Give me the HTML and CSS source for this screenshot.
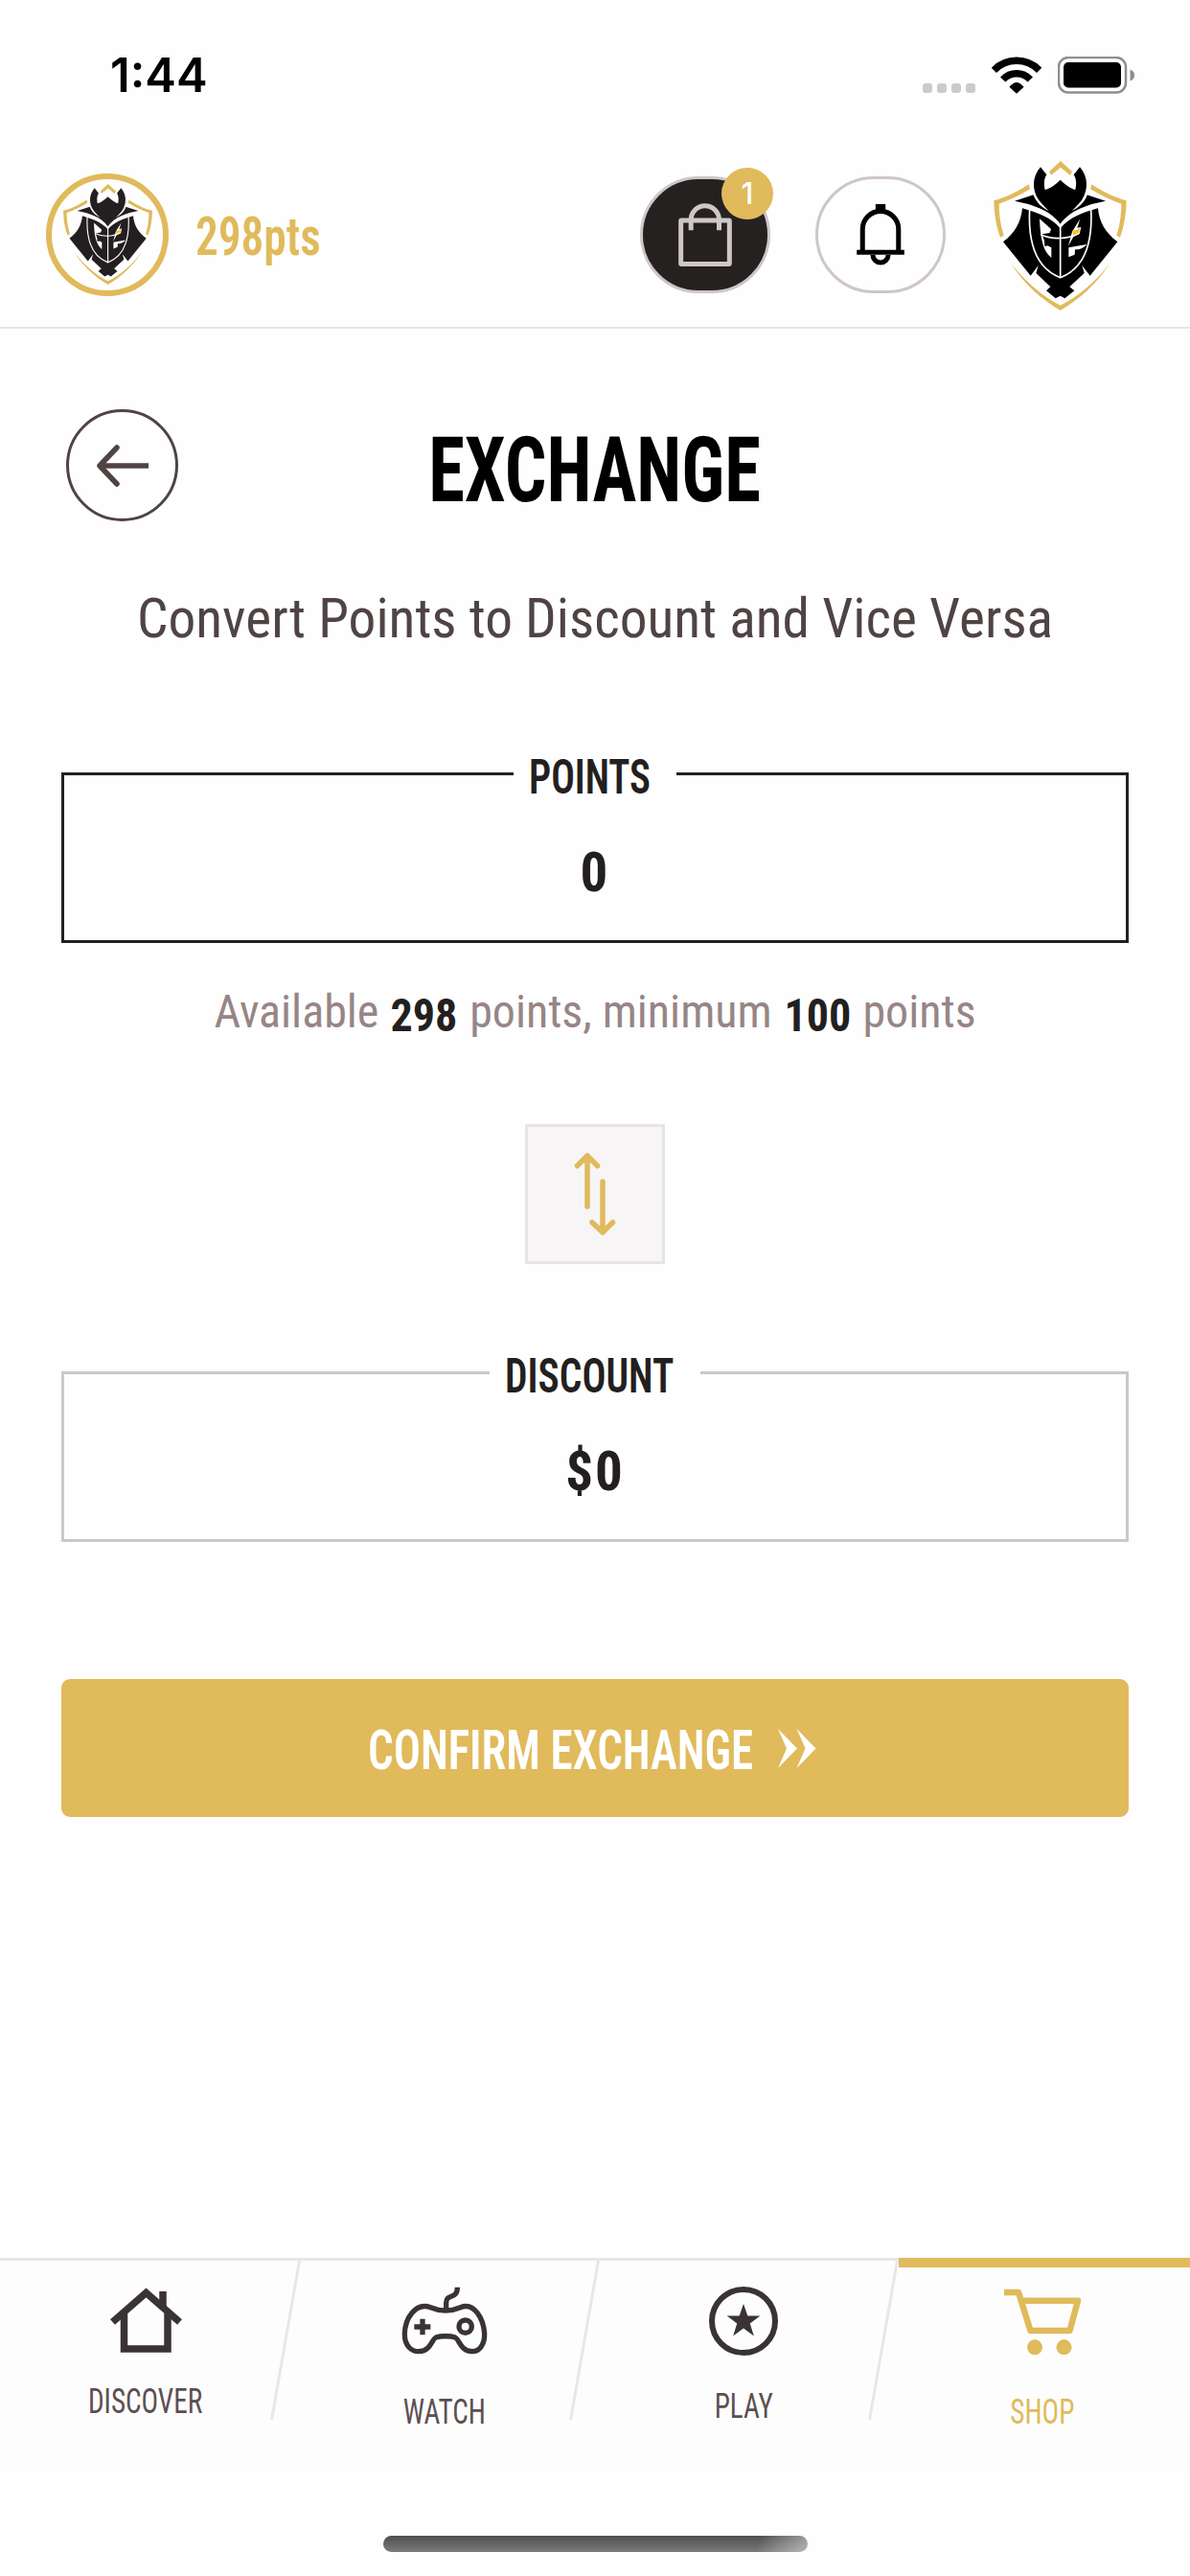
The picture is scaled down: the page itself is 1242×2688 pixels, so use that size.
FILE: index.html
```html
<!DOCTYPE html>
<html lang="en">
<head>
    <meta charset="UTF-8">
    <meta name="viewport" content="width=device-width, initial-scale=1.0">
    <title>Exchange</title>
    <link rel="stylesheet" href="styles.css">
</head>
<body>

    <!-- Crest, shared by the avatar and the header logo -->
    <svg class="defs" width="0" height="0">
        <symbol id="crest" viewBox="23 25 415 468">
            <g fill="#e0ba5b">
                <path d="M196 58L232 25L268 58L262 70L232 45L202 69Z"/>
                <path d="M132 98C100 120 60 140 23 149C24 190 30 230 43 264L54 258C43 225 39 190 39 159C72 148 105 132 136 113Z"/>
                <path d="M329 98C361 120 401 140 438 149C437 190 431 230 418 264L407 258C418 225 422 190 422 159C389 148 356 132 325 113Z"/>
                <path d="M76 344C115 410 175 460 231 493C288 460 346 410 387 344C345 400 285 452 231 477C178 452 118 400 76 344Z"/>
            </g>
            <g fill="currentColor">
                <path d="M169 44L188 68C178 84 180 102 183 115C200 111 216 98 231 84C246 98 262 111 278 115C281 102 283 84 273 68L292 44C319 75 319 115 298 148L314 131L373 150C320 160 262 178 231 222C200 178 140 160 88 150L147 131L163 148C142 115 142 75 169 44Z"/>
                <path d="M112 173C108 215 90 250 52 278L138 384L162 352L155 376L200 419L187 431L216 455L231 447L245 455L275 431L260 419L306 376L299 352L324 384L410 278C372 250 352 215 349 173C300 187 262 200 231 236C200 200 158 187 112 173Z"/>
            </g>
            <g fill="#fff">
                <path d="M147 126L157 138C166 152 180 166 195 181C174 170 157 157 147 132Z"/>
                <path d="M315 126L305 138C296 152 282 166 267 181C288 170 305 157 315 132Z"/>
                <path d="M166 206L202 238L198 250L174 254C178 275 188 278 188 288L203 296V328C172 303 168 255 166 206Z"/>
                <path d="M257 326V296L314 286C302 300 288 303 277 302L276 318Z"/>
                <path d="M293 206L284 234L296 232L291 254L272 262L256 291L268 246Z"/>
            </g>
            <g fill="none" stroke="#fff" stroke-width="5">
                <path d="M135 176C130 270 148 358 231 390C314 358 332 270 327 176"/>
                <path d="M231 230V390"/>
                <path d="M170 255C205 272 255 270 285 252"/>
            </g>
            <path fill="currentColor" d="M180 262C184 277 192 277 192 290L182 292Z"/>
            <path fill="#fbbf2d" d="M268 243L284 240L294 233L289 249L272 258Z"/>
        </symbol>
    </svg>

    <div class="status-bar">
        <span class="time">1:44</span>
        <div class="status-icons">
            <div class="dots"><i></i><i></i><i></i><i></i></div>
            <svg class="wifi" viewBox="404 86 155 115">
                <path d="M411 128C450 88 513 88 552 128M439 157C462 132 501 132 524 157" fill="none" stroke="#000" stroke-width="22"/>
                <path d="M459 180Q481.500 152 504 180L481.500 201Z"/>
            </svg>
            <svg class="battery" viewBox="0 0 80 39">
                <rect x="1" y="1" width="70" height="36.500" rx="10" fill="none" stroke="#8e8e8e" stroke-width="2.500"/>
                <rect x="6" y="6" width="60" height="26.500" rx="5"/>
                <path d="M75.500 13.500Q80 15 80 19.500T75.500 25.500Z" fill="#8e8e8e"/>
            </svg>
        </div>
    </div>

    <header class="header">
        <div class="avatar"><svg><use href="#crest"/></svg></div>
        <span class="pts"><span>298pts</span></span>
        <div class="actions">
            <button class="pill pill-dark">
                <svg width="56" height="66" viewBox="144 138 167 198" fill="none" stroke="#cec6c7" stroke-width="15">
                    <rect x="151.500" y="192" width="152" height="136.500" rx="2"/>
                    <path d="M183 223V190a44 44 0 0 1 88 0V223"/>
                </svg>
                <span class="badge">1</span>
            </button>
            <button class="pill">
                <svg width="50" height="64" viewBox="764 186 148 191" fill="none" stroke="#000" stroke-width="15">
                    <path d="M782 335V264a56 56 0 0 1 112 0V335M764 336H912M814 344a24 24 0 0 0 48 0"/>
                    <path d="M838 186V208" stroke-width="31"/>
                </svg>
            </button>
            <svg class="logo"><use href="#crest"/></svg>
        </div>
    </header>

    <main class="content">
        <div class="title-row">
            <button class="back">
                <svg width="56" height="44" viewBox="0 0 56 44" fill="none" stroke="#4f4344" stroke-width="5.500" stroke-linejoin="round">
                    <path d="M55 22H4"/>
                    <path d="M22 3L4 22L22 41" stroke-linecap="round"/>
                </svg>
            </button>
            <h1><span>EXCHANGE</span></h1>
        </div>
        <p class="subtitle">Convert Points to Discount and Vice Versa</p>

        <div class="field active">
            <div class="field-label points-label"><span>POINTS</span></div>
            <div class="field-value">0</div>
        </div>
        <p class="hint">Available <b>298</b> points, minimum <b>100</b> points</p>

        <button class="swap">
            <svg width="44" height="88" viewBox="0 0 44 88" fill="none" stroke="#e0ba5b" stroke-width="5.500" stroke-linecap="round" stroke-linejoin="round">
                <path d="M14 57V4M3.500 14.500L14 4L24.500 14.500"/>
                <path d="M30 31V84M19 73.500L30 84L40.500 73.500"/>
            </svg>
        </button>

        <div class="field">
            <div class="field-label discount-label"><span>DISCOUNT</span></div>
            <div class="field-value">$0</div>
        </div>

        <button class="confirm">
            <span class="confirm-text"><span>CONFIRM EXCHANGE</span></span>
            <svg width="40" height="41" viewBox="0 0 40 41" fill="#fff">
                <path d="M0 0L20 20.500L0 41L9 20.500ZM19.500 0L39.500 20.500L19.500 41L28.500 20.500Z"/>
            </svg>
        </button>
    </main>

    <nav class="tabs">
        <a class="tab tab-discover">
            <svg width="75" height="72" viewBox="0 0 75 72" fill="none" stroke="#393433" stroke-width="7.500">
                <path d="M2.500 37L37.500 6.500L72.500 37"/>
                <path d="M14.500 28V65H60V28M55 5V20"/>
            </svg>
            <span>DISCOVER</span>
        </a>
        <a class="tab tab-watch">
            <svg width="90" height="72" viewBox="57 48 270 216" fill="none" stroke="#393433" stroke-width="16">
                <path d="M195 123C175 123 160 118 148 113C100 95 68 150 67 195C66 235 90 252 112 251C150 248 150 215 165 207C180 202 210 202 225 207C240 215 240 248 278 251C300 252 318 230 317 195C314 150 285 95 242 113C228 119 212 123 195 123Z"/>
                <path d="M197 120V100C197 66 232 92 232 50M97 174H148M123 149V199"/>
                <circle cx="257" cy="173" r="20"/>
            </svg>
            <span>WATCH</span>
        </a>
        <a class="tab tab-play">
            <svg width="72" height="72" viewBox="0 0 72 72">
                <circle cx="36" cy="36" r="33" fill="none" stroke="#393433" stroke-width="6"/>
                <path fill="#393433" d="M36 18L40.300 30.500H53.400L42.800 38.500L46.800 51.500L36 43.500L25.200 51.500L29.200 38.500L18.600 30.500H31.700Z"/>
            </svg>
            <span>PLAY</span>
        </a>
        <a class="tab tab-shop">
            <svg width="81" height="72" viewBox="0 -2 81 72" fill="none" stroke="#e0ba5b" stroke-width="6.500" stroke-linejoin="round">
                <path d="M0 4H15L27.500 44H68.500L77 12.700H18"/>
                <circle cx="32" cy="61.300" r="8" fill="#e0ba5b" stroke="none"/>
                <circle cx="62.500" cy="61.300" r="8" fill="#e0ba5b" stroke="none"/>
            </svg>
            <span>SHOP</span>
        </a>
    </nav>
    <div class="home-indicator"></div>

</body>
</html>
```
FILE: styles.css
```css
* {
    box-sizing: border-box;
}
body {
    font-family: 'Roboto Condensed', Roboto, sans-serif;
    font-stretch: 75%;
    margin: 0;
    background: #fefefe;
    width: 1242px;
    height: 2688px;
    display: flex;
    flex-direction: column;
    overflow: hidden;
    color: #231f20;
}
button {
    font: inherit;
    padding: 0;
    background: none;
    border: none;
}
svg {
    display: block;
    flex: none;
}
.defs {
    position: absolute;
}
/* Status bar */
.status-bar {
    height: 148px;
    padding: 0 58px 0 115px;
    display: flex;
    justify-content: space-between;
}
.time {
    font-family: Inter, sans-serif;
    font-weight: 600;
    font-size: 49px;
    line-height: 158px;
    color: #000;
}
.status-icons {
    display: flex;
    height: 39px;
    margin-top: 59px;
}
.dots {
    display: flex;
    gap: 5px;
    align-items: flex-end;
    margin: 0 17px 1px 0;
}
.dots i {
    width: 10px;
    height: 10px;
    border-radius: 3px;
    background: #cbcbcb;
}
.wifi {
    width: 52px;
    height: 39px;
    margin-right: 17px;
}
.battery {
    width: 80px;
    height: 39px;
}
/* Header */
.header {
    height: 195px;
    padding: 0 66px 0 48px;
    border-bottom: 2px solid #e7e5e6;
    display: flex;
    align-items: center;
}
.avatar {
    width: 128px;
    height: 128px;
    border: 6.5px solid #e0ba5b;
    border-radius: 50%;
    display: flex;
    align-items: center;
    justify-content: center;
    color: #231f20;
}
.avatar svg {
    width: 93px;
    height: 105px;
}
.pts {
    width: 140px;
    margin-left: 28px;
    font-size: 55px;
    font-weight: 600;
    color: #e0ba5b;
    white-space: nowrap;
    padding-top: 4px;
}
.pts span {
    display: inline-block;
    transform: scaleX(.86);
    transform-origin: left;
}
.actions {
    display: flex;
    align-items: center;
    margin-left: auto;
}
.pill {
    position: relative;
    width: 136px;
    height: 122px;
    border: 3px solid #cec6c7;
    border-radius: 61px;
    margin-right: 47px;
    display: flex;
    align-items: center;
    justify-content: center;
    flex: none;
}
.pill-dark {
    background: #262121;
}
.badge {
    position: absolute;
    top: -12px;
    right: -6px;
    width: 54px;
    height: 54px;
    border-radius: 50%;
    background: #e0ba5b;
    color: #fff;
    font-family: Inter, sans-serif;
    font-size: 31px;
    font-weight: 500;
    line-height: 54px;
    text-align: center;
}
.logo {
    width: 139px;
    height: 156px;
    margin-left: 3px;
    margin-top: 3px;
    color: #000;
}
/* Content */
.content {
    padding: 84px 64px 0;
    display: flex;
    flex-direction: column;
}
.title-row {
    display: grid;
    grid-template-columns: 117px 1fr 117px;
    padding: 0 5px;
    height: 117px;
}
.back {
    width: 117px;
    height: 117px;
    border: 3px solid #4f4344;
    border-radius: 50%;
    display: flex;
    align-items: center;
    justify-content: center;
}
h1 {
    margin: 0;
    font-size: 95px;
    font-weight: 700;
    line-height: 127px;
    text-align: center;
    color: #000;
}
h1 span {
    display: inline-block;
    transform: scaleX(.808);
}
.subtitle {
    margin: 62px 0 0;
    font-size: 57.4px;
    line-height: 80px;
    text-align: center;
    color: #4f4344;
}
.field {
    height: 178px;
    margin-top: 120px;
    border: 3px solid #cec6c7;
    display: flex;
    flex-direction: column;
    align-items: center;
}
.field.active {
    border-color: #231f20;
}
.field-label {
    height: 56px;
    line-height: 56px;
    margin-top: -26px;
    padding-right: 11px;
    background: #fefefe;
    font-size: 50px;
    font-weight: 600;
    display: flex;
    justify-content: center;
    flex: none;
}
.field-label span {
    transform: scaleX(.82);
}
.points-label {
    width: 170px;
}
.discount-label {
    width: 220px;
}
.field-value {
    font-size: 57px;
    font-weight: 700;
    line-height: 143px;
    letter-spacing: 2px;
}
.hint {
    margin: 37px 0 0;
    font-size: 48px;
    line-height: 70px;
    text-align: center;
    color: #978586;
}
.hint b {
    display: inline-block;
    color: #231f20;
    transform: translateY(4px) scaleX(.96);
}
.swap {
    width: 146px;
    height: 146px;
    margin: 82px auto 0;
    background: #f7f5f6;
    border: 3px solid #e8e4e6;
    display: flex;
    align-items: center;
    justify-content: center;
}
.swap + .field {
    margin-top: 112px;
}
.swap + .field .field-label span {
    transform: scaleX(.83);
}
.confirm {
    height: 144px;
    margin-top: 143px;
    padding-right: 6px;
    background: #e0ba5b;
    border-radius: 9px;
    color: #fff;
    display: flex;
    align-items: center;
    justify-content: center;
    gap: 28px;
}
.confirm-text {
    width: 400px;
    font-size: 57.5px;
    font-weight: 600;
    white-space: nowrap;
    text-align: left;
    padding-top: 4px;
}
.confirm-text span {
    display: inline-block;
    transform: scaleX(.815);
    transform-origin: left;
}
/* Bottom tabs */
.tabs {
    height: 224px;
    margin-top: auto;
    background: #fdfdfd;
    border-top: 3px solid #e8e5e7;
    display: grid;
    grid-template-columns: repeat(4, 312px);
}
.tab {
    position: relative;
    padding: 27px 8px 0 0;
    display: flex;
    flex-direction: column;
    align-items: center;
    font-size: 36.5px;
    line-height: 40px;
    color: #5c4f50;
}
.tab span {
    transform: scaleX(.8);
}
.tab::after {
    content: '';
    position: absolute;
    top: 0;
    right: -2px;
    height: 166px;
    border-right: 3px solid #eae6e8;
    transform: skewX(-9.9deg);
    transform-origin: top;
}
.tab-discover span {
    margin-top: 28px;
}
.tab-watch span,
.tab-shop span {
    margin-top: 39px;
}
.tab-play span {
    margin-top: 33px;
}
.tab-shop {
    color: #e0ba5b;
}
.tab-shop::after {
    top: -3px;
    left: 2px;
    right: 0;
    height: 10px;
    background: #e0ba5b;
    border: none;
    transform: none;
}
.home-indicator {
    width: 443px;
    height: 17px;
    margin: 66px auto 25px;
    border-radius: 9px;
    background: linear-gradient(100deg, rgba(255, 255, 255, 0) 88%, rgba(255, 255, 255, .45)), linear-gradient(#4e4e4e, #7b7b7b);
    flex: none;
}
```
